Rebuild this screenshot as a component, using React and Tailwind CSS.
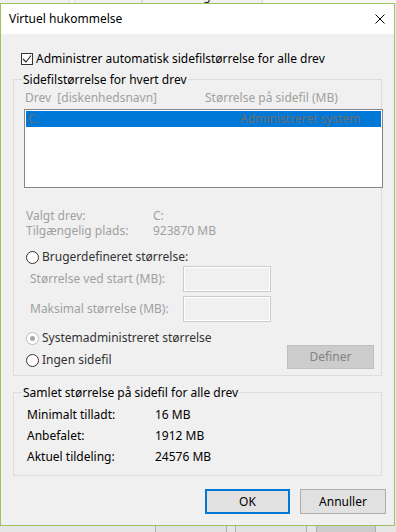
import React from "react";

function Radio({ state }) {
  if (state === "disabledChecked") {
    return (
      <div className="w-[13px] h-[13px] rounded-full border border-[#bcbcbc] bg-white flex items-center justify-center shrink-0">
        <div className="w-[5px] h-[5px] rounded-full bg-[#a8a8a8]" />
      </div>
    );
  }
  return <div className="w-[13px] h-[13px] rounded-full border border-[#333333] bg-white shrink-0" />;
}

function Group({ label, children, className }) {
  return (
    <div className={"ml-[12px] w-[369px] border border-[#dcdcdc] " + (className || "")}>
      <div className="-mt-[8px] ml-[8px] w-fit px-[1px] bg-[#f0f0f0] h-[16px] leading-[16px] text-black">{label}</div>
      {children}
    </div>
  );
}

export default function App() {
  return (
    <div className="w-[396px] h-[532px] overflow-hidden bg-[#ececec] font-['Noto_Sans',sans-serif] text-[12px] leading-[16px] text-black flex flex-col">
      {/* underlying tabs */}
      <div className="h-[3px] shrink-0 overflow-hidden flex bg-[#f7f7f7] text-[#222]">
        <div className="w-[70px] bg-[#f0f0f0] border-r border-[#d9d9d9] whitespace-nowrap overflow-hidden">
          <div className="-mt-[12px] -ml-[14px]">Visuelle effekter</div>
        </div>
        <div className="w-[4px]" />
        <div className="w-[68px] bg-[#f0f0f0] border-x border-[#d9d9d9] whitespace-nowrap overflow-hidden pl-[7px]">
          <div className="-mt-[12px]">Avanceret</div>
        </div>
        <div className="w-[121px] bg-[#f0f0f0] border-x border-[#d9d9d9] whitespace-nowrap overflow-hidden pl-[1px]">
          <div className="-mt-[12px]">Forbindring af datakørsel</div>
        </div>
      </div>

      {/* window */}
      <div className="w-[395px] h-[523px] shrink-0 border border-[#9dc35f] bg-[#f0f0f0] flex flex-col">
        <div className="h-[30px] shrink-0 bg-white flex items-center justify-between pl-[8px] pr-[8px]">
          <span className="text-[12px] text-black">Virtuel hukommelse</span>
          <svg width="10" height="10" viewBox="0 0 10 10" className="mr-[1px]">
            <path d="M0.5 0.5 L9.5 9.5 M9.5 0.5 L0.5 9.5" stroke="#000" strokeWidth="1" fill="none" />
          </svg>
        </div>

        <div className="flex-1 flex flex-col">
          {/* checkbox */}
          <div className="mt-[17px] h-[16px] flex items-center ml-[20px] gap-[3px]">
            <div className="w-[12px] h-[12px] border border-[#333333] bg-white flex items-center justify-center shrink-0">
              <svg width="10" height="10" viewBox="0 0 10 10">
                <path d="M1 5 L4 8 L9 1.5" stroke="#222" strokeWidth="1.1" fill="none" />
              </svg>
            </div>
            <span>Administrer automatisk sidefilstørrelse for alle drev</span>
          </div>

          {/* group 1 */}
          <Group label="Sidefilstørrelse for hvert drev" className="mt-[12px] pb-[7px]">
            <div className="mt-[2px] h-[16px] flex text-[#a0a0a0]">
              <span className="ml-[11px] w-[180px]">Drev&nbsp;&nbsp;[diskenhedsnavn]</span>
              <span>Størrelse på sidefil (MB)</span>
            </div>
            <div className="mt-[3px] ml-[10px] w-[359px] h-[79px] border border-[#828790] bg-white p-[1px]">
              <div className="h-[16px] bg-[#0078d7] flex text-[#6d6d6d]">
                <span className="ml-[2px] w-[212px]">C:</span>
                <span>Administreret system</span>
              </div>
            </div>

            <div className="mt-[20px] text-[#a0a0a0] leading-[15px]">
              <div className="flex h-[15px]">
                <span className="ml-[12px] w-[127px]">Valgt drev:</span>
                <span>C:</span>
              </div>
              <div className="flex h-[15px]">
                <span className="ml-[12px] w-[127px]">Tilgængelig plads:</span>
                <span>923870 MB</span>
              </div>
            </div>

            <div className="mt-[11px] h-[16px] flex items-center ml-[12px] gap-[3px] text-[#333]">
              <Radio />
              <span>Brugerdefineret størrelse:</span>
            </div>

            <div className="mt-[1px] h-[26px] flex items-center">
              <span className="ml-[16px] w-[153px] text-[#a0a0a0]">Størrelse ved start (MB):</span>
              <div className="w-[88px] h-[26px] border border-[#cccccc] bg-[#f0f0f0] shadow-[inset_0_0_0_1px_#ffffff]" />
            </div>
            <div className="mt-[4px] h-[26px] flex items-center">
              <span className="ml-[16px] w-[153px] text-[#a0a0a0]">Maksimal størrelse (MB):</span>
              <div className="w-[88px] h-[26px] border border-[#cccccc] bg-[#f0f0f0] shadow-[inset_0_0_0_1px_#ffffff]" />
            </div>

            <div className="mt-[8px] flex items-end justify-between">
              <div className="flex flex-col gap-[6px] ml-[12px] text-[#333]">
                <div className="h-[16px] flex items-center gap-[3px]">
                  <Radio state="disabledChecked" />
                  <span>Systemadministreret størrelse</span>
                </div>
                <div className="h-[16px] flex items-center gap-[3px]">
                  <Radio />
                  <span>Ingen sidefil</span>
                </div>
              </div>
              <div className="mr-[7px] mb-[-1px] w-[87px] h-[24px] border border-[#bfbfbf] bg-[#cccccc] flex items-center justify-center text-[#838383]">
                Definer
              </div>
            </div>
          </Group>

          {/* group 2 */}
          <Group label="Samlet størrelse på sidefil for alle drev" className="mt-[16px] pb-[8px]">
            <div className="mt-[3px]">
              <div className="h-[21px] flex items-center">
                <span className="ml-[13px] w-[128px]">Minimalt tilladt:</span>
                <span>16 MB</span>
              </div>
              <div className="h-[21px] flex items-center">
                <span className="ml-[13px] w-[128px]">Anbefalet:</span>
                <span>1912 MB</span>
              </div>
              <div className="h-[21px] flex items-center">
                <span className="ml-[13px] w-[128px]">Aktuel tildeling:</span>
                <span>24576 MB</span>
              </div>
            </div>
          </Group>

          {/* buttons */}
          <div className="mt-[13px] flex justify-end gap-[10px] pr-[8px]">
            <div className="w-[85px] h-[25px] border-2 border-[#0078d7] bg-[#e1e1e1] flex items-center justify-center">OK</div>
            <div className="w-[86px] h-[25px] border border-[#adadad] bg-[#e1e1e1] flex items-center justify-center">Annuller</div>
          </div>
        </div>
      </div>

      {/* underlying dialog bottom */}
      <div className="flex-1 flex bg-[#e6e6e6]">
        <div className="ml-[155px] w-[72px] border-x border-[#adadad] bg-[#e1e1e1]" />
        <div className="ml-[8px] w-[72px] border-x border-[#adadad] bg-[#e1e1e1]" />
        <div className="ml-[9px] w-[60px] border-x border-[#adadad] bg-[#cccccc]" />
      </div>
    </div>
  );
}
